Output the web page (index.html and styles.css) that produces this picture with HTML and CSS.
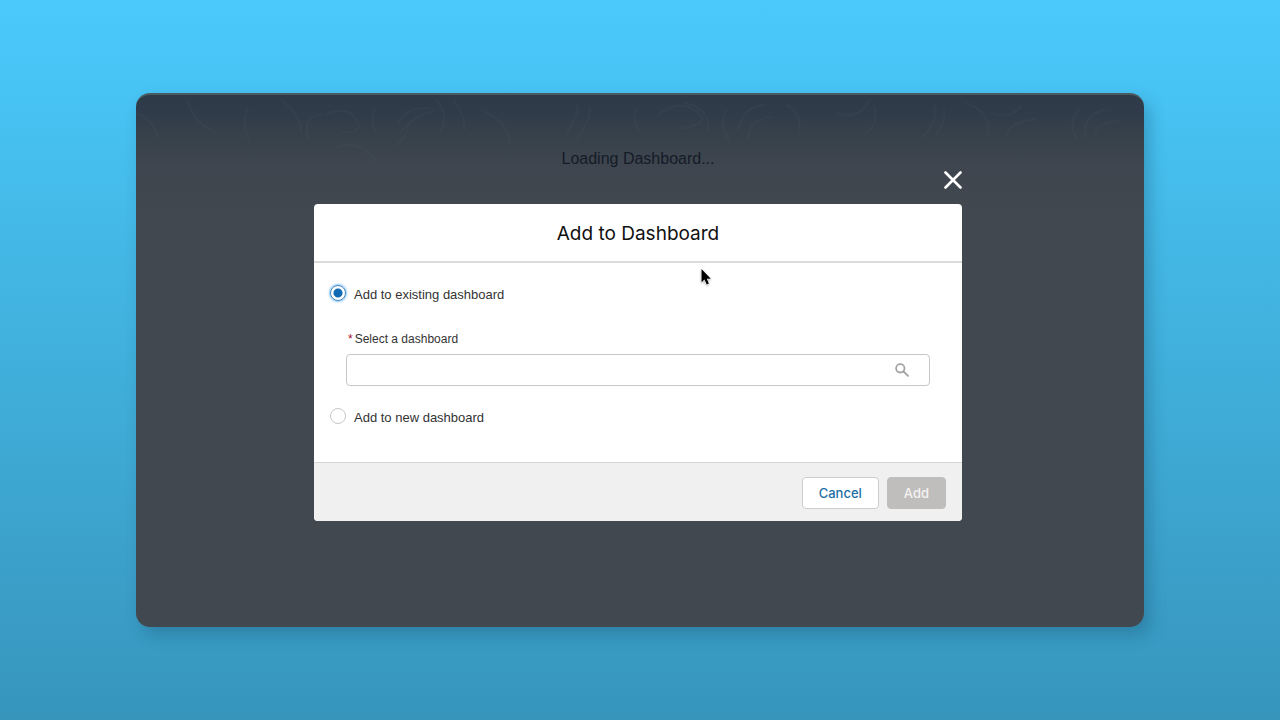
FILE: index.html
```html
<!DOCTYPE html>
<html lang="en">
<head>
  <meta charset="UTF-8">
  <meta name="viewport" content="width=device-width, initial-scale=1.0">
  <link rel="stylesheet" href="styles.css">
  <title>Add to Dashboard</title>
</head>
<body>
  <main class="screen">
    <!-- Faint contour lines behind the page -->
    <svg class="contours" viewBox="0 0 1008 90" preserveAspectRatio="xMidYMin slice" aria-hidden="true">
      <path d="M0 18q18 6 22 26M52 6q6 22 28 32M112 14q-8 16 2 32M145 5q20 14 20 32M173 46q-8-26 12-26M190 20q20-10 30 4t-16 14M238 14q-4 14 2 24M262 30q8-20 32-16M264 38q14-18 34-22M300 4q14 16 4 34M318 6q12 16 10 30M348 16q24 12 26 32M260 50q14-10 12-24M200 52q24-8 40 14"/>
      <path d="M430 40q10-14 12-30M440 46q14-20 14-34M500 12q-4 14 4 26M522 20q20-16 38-4t-16 18M548 8q26 4 24 28M590 14q-8 16 4 32M602 36q4-24 26-26M612 44q0-20 24-22M650 10q18 8 12 30M700 18q24 8 34-14M726 40q18-8 12-30M786 42q18-16 12-32M800 40q10-12 8-26M830 8q26 10 22 34M858 18q14 8 28-8M870 42q4-16 30-18M944 14q-14 14-2 32M950 44q-6-22 20-30M960 42q-4-14 24-16"/>
    </svg>

    <p class="loading">Loading Dashboard...</p>

    <div class="dialog">
      <button class="close" type="button" aria-label="Close">
        <svg viewBox="0 0 18 18" aria-hidden="true"><path d="M1.5 1.5l15 15M16.5 1.5l-15 15"/></svg>
      </button>

      <form class="modal">
        <header class="modal-header">
          <h1>Add to Dashboard</h1>
        </header>

        <div class="modal-body">
          <div class="option">
            <input type="radio" name="target" id="existing" checked>
            <label for="existing">Add to existing dashboard</label>
          </div>

          <div class="field">
            <label for="dashboard"><span class="required">*</span>Select a dashboard</label>
            <div class="search">
              <input type="text" id="dashboard" required>
              <svg viewBox="0 0 14 14" aria-hidden="true"><circle cx="5.3" cy="5.3" r="4.2"/><path d="M8.5 8.5l4.5 4.3"/></svg>
            </div>
          </div>

          <div class="option">
            <input type="radio" name="target" id="new">
            <label for="new">Add to new dashboard</label>
          </div>
        </div>

        <footer class="modal-footer">
          <button class="button" type="button">Cancel</button>
          <button class="button button-add" type="submit" disabled>Add</button>
        </footer>
      </form>

      <!-- Mouse pointer -->
      <svg class="pointer" viewBox="0 0 12 19" aria-hidden="true">
        <path d="M1.5 1v13.2l3-2.8 2.2 5.2 2.2-1-2.1-4.9h4z"/>
      </svg>
    </div>
  </main>
</body>
</html>
```

FILE: styles.css
```css
* {
  box-sizing: border-box;
}

body {
  margin: 0;
  min-height: 100vh;
  padding: 93px 136px;
  background: linear-gradient(#4acafb, #3795bc);
  font-family: "Liberation Sans", Arial, sans-serif;
  font-size: 13px;
  color: #333;
}

.screen {
  position: relative;
  min-height: calc(100vh - 186px);
  padding: 54px 4px 54px 0;
  display: flex;
  flex-direction: column;
  align-items: center;
  border-top: 2px solid #4a5a60;
  border-radius: 14px;
  background: linear-gradient(#2e3a47, #303c49 20px, #38424b 45px, #40464f 75px, #42484f 120px);
  box-shadow: 6px 8px 16px rgba(20, 70, 100, 0.3);
}

.contours {
  position: absolute;
  top: 0;
  left: 0;
  width: 100%;
  height: 90px;
  fill: none;
  stroke: #4a5a68;
  stroke-width: 2;
  opacity: 0.15;
}

.loading {
  margin: 0;
  font-size: 16px;
  line-height: 20px;
  color: #141b28;
}

.dialog {
  position: relative;
  width: 100%;
  max-width: 648px;
  display: flex;
  flex-direction: column;
}

.close {
  align-self: flex-end;
  width: 18px;
  height: 18px;
  margin: 2px 0 15px;
  padding: 0;
  border: 0;
  background: none;
}

.close svg {
  display: block;
  fill: none;
  stroke: #fff;
  stroke-width: 2.6;
  stroke-linecap: round;
}

.modal {
  border-radius: 4px;
  background: #fff;
  overflow: hidden;
}

.modal-header {
  padding: 15px 16px 13px;
  border-bottom: 2px solid #dddbda;
  text-align: center;
}

.modal-header h1 {
  margin: 0;
  font-family: Inter, sans-serif;
  font-size: 19px;
  font-weight: 400;
  line-height: 29px;
  color: #111;
}

.modal-body {
  padding: 20px 16px 32px;
}

.option {
  display: flex;
  align-items: flex-start;
  gap: 8px;
  line-height: 24px;
}

.option input {
  appearance: none;
  width: 16px;
  height: 16px;
  margin: 2px 0;
  border: 1px solid #c9c7c5;
  border-radius: 50%;
  background: #fff;
}

.option input:checked {
  border-color: #3b82bd;
  background: radial-gradient(circle, #0f69b4 4px, #fff 5px);
  box-shadow: 0 0 3px #1589ee;
}

.field {
  margin: 24px 16px 20px;
}

.field label {
  display: block;
  padding-left: 2px;
  font-size: 12px;
  line-height: 16px;
}

.required {
  margin-right: 2px;
  color: #a3102c;
}

.search {
  margin-top: 7px;
  height: 32px;
  padding-right: 20px;
  display: flex;
  align-items: center;
  border: 1px solid #c9c7c5;
  border-radius: 4px;
}

.search input {
  flex: 1;
  min-width: 0;
  padding: 0 12px;
  border: 0;
  outline: 0;
  background: none;
  font: inherit;
}

.search svg {
  width: 14px;
  height: 14px;
  fill: none;
  stroke: #a5a3a1;
  stroke-width: 1.8;
  stroke-linecap: round;
}

.modal-footer {
  padding: 14px 16px 12px;
  display: flex;
  justify-content: flex-end;
  gap: 8px;
  border-top: 1px solid #d8d6d5;
  background: #f0f0f0;
}

.button {
  height: 32px;
  padding: 0 16px;
  border: 1px solid #cfcdcb;
  border-radius: 4px;
  background: #fff;
  font-family: Inter, sans-serif;
  font-size: 13px;
  font-weight: 500;
  color: #1c6fa5;
}

.button-add {
  border-color: #c0bebd;
  background: #c0bebd;
  color: #f3f2f2;
}

.pointer {
  position: absolute;
  top: 99px;
  left: 386px;
  width: 12px;
  height: 19px;
  fill: #000;
  stroke: #fff;
  stroke-width: 1;
  paint-order: stroke;
  filter: drop-shadow(0 1px 1px rgba(0, 0, 0, 0.3));
}
```
